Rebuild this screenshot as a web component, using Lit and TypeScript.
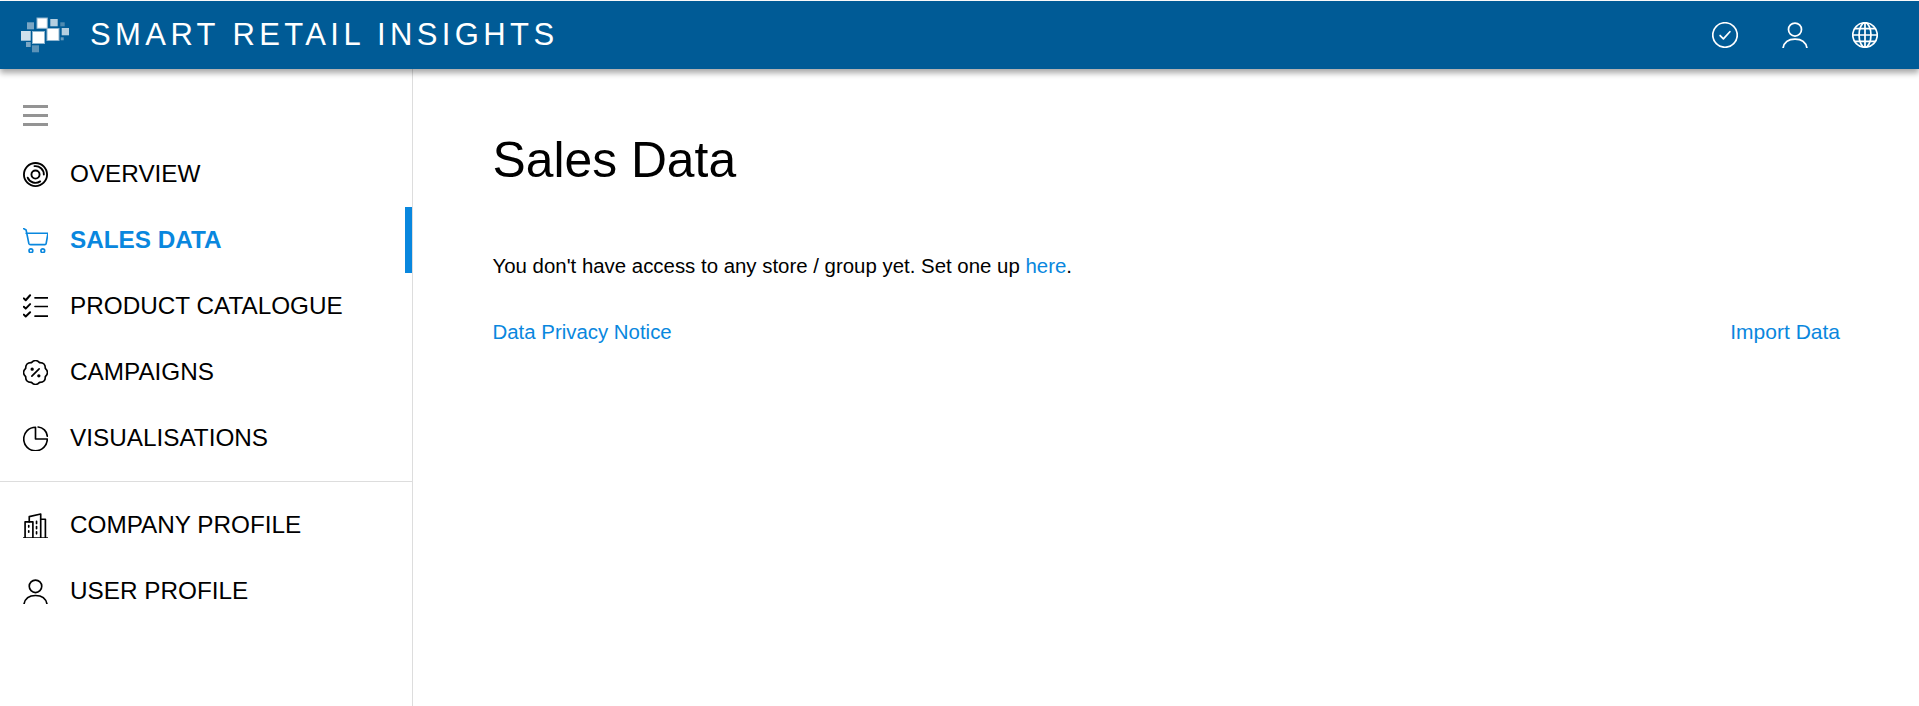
import { LitElement, html, css, svg } from "lit";
import { customElement } from "lit/decorators.js";

const ic = (body: unknown, w = 1.6) => html`<svg class="icon" viewBox="0 0 24 24" fill="none" stroke="currentColor" stroke-width=${w} stroke-linecap="round" stroke-linejoin="round">${body}</svg>`;

const badgePath = () => {
  const n = 8;
  let d = "";
  for (let i = 0; i < n; i++) {
    const a = (i / n) * 2 * Math.PI - Math.PI / 2 + Math.PI / 8;
    const b = a + Math.PI / n;
    const c = a + (2 * Math.PI) / n;
    const pt = (ang: number, r: number) => `${(12 + r * Math.cos(ang)).toFixed(2)} ${(12 + r * Math.sin(ang)).toFixed(2)}`;
    if (i === 0) d += `M${pt(a, 10.2)}`;
    d += `Q${pt(b, 13.6)} ${pt(c, 10.2)}`;
  }
  return d + "Z";
};

const icons = {
  overview: svg`<circle cx="12" cy="12" r="11.100"/><circle cx="12" cy="12" r="3.900"/><path d="M11 4A8 8 0 0 1 20 12"/><path d="M4.500 15A8 8 0 0 0 16.500 18.600"/>`,
  cart: svg`<path d="M.6 .6 3 2 5.600 14.800Q6 16 7.200 16H21Q22 16 22.200 15L24 5H3"/><circle cx="7.600" cy="21.800" r="1.800"/><circle cx="19" cy="21.800" r="1.800"/>`,
  list: svg`<path stroke-width="1.900" d="M.8 4.200 2.600 6 6.800 1.200M.8 12.200 2.600 14 6.800 9.700M.8 19.800 2.600 21.600 6.800 17.500"/><path d="M11.500 3.700h13M11.500 12h13M11.500 21.300h13"/>`,
  badge: svg`<path d=${badgePath()}/><path d="M8.500 15.500 15.500 8.500"/><circle cx="8.800" cy="8.800" r=".8"/><circle cx="15.200" cy="15.200" r=".8"/>`,
  pie: svg`<path d="M12 1.200A11.300 11.300 0 1 0 23.300 12.500H12Z"/><path d="M14.500 1A9.500 9.500 0 0 1 23.300 9.800"/>`,
  building: svg`<path d="M0 24H23.500"/><path d="M2 24V8.500H9.500V24"/><path d="M6 8.500V3.500L17 1V24"/><path d="M17 6H21.500V24"/><path d="M5.500 12v1.500M5.500 17v1.500M13 8v2M13 13v2M13 18v2"/>`,
  user: svg`<circle cx="12" cy="7" r="6"/><path d="M1 24C2 18.500 6.500 15.800 12 15.800S22 18.500 23 24"/>`,
};

const nav = [
  { k: "overview", t: "OVERVIEW" },
  { k: "cart", t: "SALES DATA", active: true },
  { k: "list", t: "PRODUCT CATALOGUE" },
  { k: "badge", t: "CAMPAIGNS" },
  { k: "pie", t: "VISUALISATIONS" },
];
const nav2 = [
  { k: "building", t: "COMPANY PROFILE" },
  { k: "user", t: "USER PROFILE" },
];

@customElement("app-root")
export class AppRoot extends LitElement {
  static styles = css`
    :host { display: flex; flex-direction: column; height: 706px; font-family: "Liberation Sans", Arial, sans-serif; color: #000; background: #fff; overflow: hidden; }
    .head { flex: none; height: 68px; margin-top: 1px; background: #005b96; color: #fff; display: flex; align-items: center; padding: 0 41px 0 21px; box-shadow: 0 4px 6px rgba(0,0,0,.35); position: relative; z-index: 2; }
    .logo { width: 49px; height: 36px; flex: none; }
    .title { margin-left: 20px; font-size: 31px; letter-spacing: 4.4px; flex: 1; white-space: nowrap; }
    .actions { display: flex; gap: 44px; }
    .actions .icon { width: 26px; height: 26px; display: block; }
    .body { flex: 1; display: flex; min-height: 0; }
    .side { width: 412px; flex: none; border-right: 1px solid #ddd; box-sizing: content-box; }
    .burger { height: 72px; box-sizing: border-box; padding: 36px 0 0 22.500px; }
    .burger i { display: block; width: 25px; height: 3px; background: #949494; margin-bottom: 6px; }
    .row { height: 66px; display: flex; align-items: center; padding-left: 22.500px; font-size: 24.300px; position: relative; white-space: nowrap; }
    .row .icon { width: 25px; height: 25px; flex: none; margin-right: 22.500px; }
    .row.active { color: #0987de; font-weight: 700; }
    .row.active::after { content: ""; position: absolute; right: 0; top: 0; bottom: 0; width: 7px; background: #0987de; }
    .sep { height: 1px; background: #ddd; margin: 10px 0 10px; }
    .main { flex: 1; padding: 61px 79px 0 79.500px; min-width: 0; }
    h1 { margin: 0 0 64px; font-size: 49.800px; font-weight: 400; line-height: 60px; }
    p { margin: 0 0 42px; font-size: 20.420px; line-height: 24px; }
    a { color: #0987de; text-decoration: none; }
    .links { display: flex; justify-content: space-between; align-items: center; font-size: 20.420px; line-height: 24px; }
    .import { font-size: 21px; }
  `;

  render() {
    const row = (n: { k: string; t: string; active?: boolean }) => html`
      <div class="row ${n.active ? "active" : ""}">${ic((icons as Record<string, unknown>)[n.k], n.k === "overview" ? 1.8 : 1.6)}<span>${n.t}</span></div>`;
    return html`
      <header class="head">
        <svg class="logo" viewBox="21 17 49 36">
          <g stroke="#8fb6d0" stroke-width="1">
            <rect x="37" y="18" width="10.300" height="10.300" fill="#fff"/>
            <rect x="32.500" y="31.500" width="12" height="12" fill="#fff"/>
            <rect x="47" y="28.500" width="12" height="12" fill="#fff"/>
          </g>
          <rect x="21" y="31" width="9.700" height="9.700" fill="#cfe0ec"/>
          <rect x="27" y="22.300" width="7" height="7" fill="#7aa6c4"/>
          <rect x="50.300" y="19" width="7.400" height="7.300" fill="#b5cfe0"/>
          <rect x="60.300" y="22.300" width="4.400" height="4" fill="#4f8ab0"/>
          <rect x="61.700" y="28" width="7.300" height="7.300" fill="#b5cfe0"/>
          <rect x="60.700" y="37.300" width="3" height="3" fill="#6a9cbd"/>
          <rect x="26" y="42" width="4.700" height="5" fill="#7aa6c4"/>
          <rect x="32" y="45.300" width="7" height="7" fill="#5c93b8"/>
        </svg>
        <div class="title">SMART RETAIL INSIGHTS</div>
        <div class="actions">
          ${ic(svg`<circle cx="12" cy="12" r="11.300"/><path d="M7.500 12.500 10.500 15.500 16.500 9"/>`)}
          ${ic(icons.user)}
          ${ic(svg`<circle cx="12" cy="12" r="11.300"/><ellipse cx="12" cy="12" rx="5.500" ry="11.300"/><path d="M12 .7V23.300M.7 12H23.300M2.500 6.200H21.500M2.500 17.800H21.500"/>`)}
        </div>
      </header>
      <div class="body">
        <nav class="side">
          <div class="burger"><i></i><i></i><i></i></div>
          ${nav.map(row)}
          <div class="sep"></div>
          ${nav2.map(row)}
        </nav>
        <main class="main">
          <h1>Sales Data</h1>
          <p>You don't have access to any store / group yet. Set one up <a href="#">here</a>.</p>
          <div class="links"><a href="#">Data Privacy Notice</a><a class="import" href="#">Import Data</a></div>
        </main>
      </div>
    `;
  }
}
